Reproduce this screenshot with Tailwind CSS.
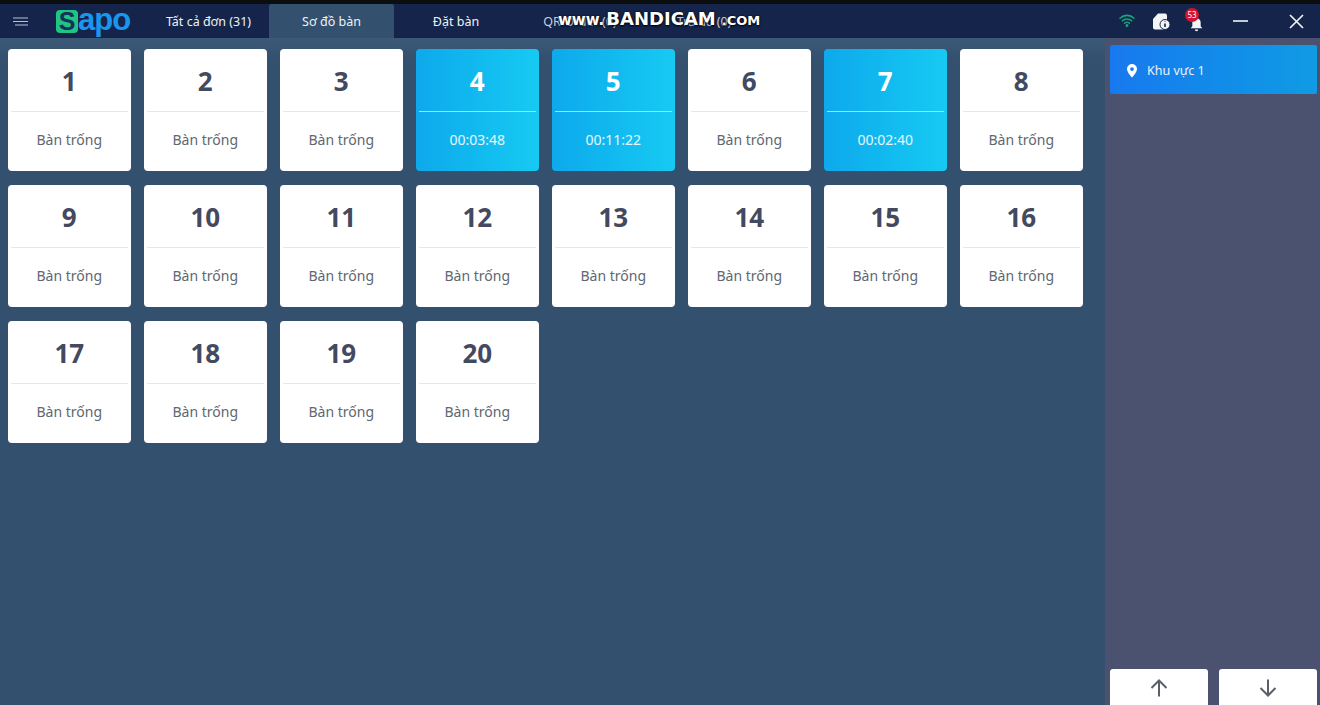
<!DOCTYPE html>
<html lang="vi"><head><meta charset="utf-8"><script src="https://cdn.jsdelivr.net/npm/@tailwindcss/browser@4"></script></head>
<body class="w-[1320px] h-[705px] overflow-hidden bg-[#34506f] font-['Noto_Sans','Open_Sans',sans-serif]">
<div class="relative w-full h-full flex flex-col">
<div class="h-[4px] bg-[#0c0d0f] shrink-0"></div>
<header class="h-[34px] shrink-0 flex items-stretch bg-[#15244a] text-[#eef2f6] text-[12.5px]">
  <div class="w-[56px] flex items-center pl-[13px]">
    <svg width="15" height="9" viewBox="0 0 15 9" fill="none" stroke="#b9c2cf" stroke-width="1.2"><path d="M0 1h15M0 4.500h15M2 8h13"/></svg>
  </div>
  <div class="w-[92px] flex items-center">
    <div class="flex items-center h-[28px]">
      <span class="w-[22px] h-[23px] rounded-[4px] bg-[#20c584] text-[#13345a] flex items-center justify-center font-bold text-[25px] leading-none font-['Liberation_Sans',sans-serif]">S</span>
      <span class="text-[#1a96ee] font-bold text-[31px] leading-none -mt-[3px] font-['Liberation_Sans',sans-serif] tracking-[-1px]">apo</span>
    </div>
  </div>
  <div class="w-[121px] flex items-center justify-center pt-[3px]">Tất cả đơn (31)</div>
  <div class="w-[125px] flex items-center justify-center bg-[#34506f] rounded-t-[2px] pt-[3px]">Sơ đồ bàn</div>
  <div class="w-[124px] flex items-center justify-center pt-[3px]">Đặt bàn</div>
  <div class="w-[124px] flex items-center justify-center text-[#c9d0db] pt-[3px]">QR Order (0)</div>
  <div class="w-[124px] flex items-center justify-center text-[#c9d0db] pt-[3px]">Trả đồ (0)</div>
  <div class="ml-auto flex items-center">
    <svg class="mr-[17px] -mt-[1px]" width="16" height="13" viewBox="0 0 16 13" fill="none" stroke="#16a57c" stroke-width="1.6" stroke-linecap="round"><path d="M1 4.200a10 10 0 0 1 14 0M3.400 6.800a6.600 6.600 0 0 1 9.200 0M5.600 9.200a3.400 3.400 0 0 1 4.800 0"/><circle cx="8" cy="11.400" r=".7" fill="#16a57c"/></svg>
    <svg class="mr-[17px]" width="19" height="19" viewBox="0 0 19 19"><path d="M6 1.500h7a2 2 0 0 1 2 2v12a2 2 0 0 1-2 2H3a2 2 0 0 1-2-2V7z" fill="#f3f4f6"/><circle cx="13" cy="12.500" r="5" fill="#f3f4f6" stroke="#15244a" stroke-width="1"/><path d="M13 9.500v.6M13 11.500v3.500" stroke="#15244a" stroke-width="1.600"/></svg>
    <div class="relative mr-[29px] w-[16px] h-[24px] flex items-end justify-center">
      <svg width="15" height="16" viewBox="0 0 18 18" fill="#f3f4f6"><path d="M9 1a5 5 0 0 1 5 5v4.500l2 2.500H2l2-2.500V6a5 5 0 0 1 5-5z"/><path d="M7 14.500h4a2 2 0 0 1-4 0z"/></svg>
      <span class="absolute top-[-1px] -left-[3px] w-[14px] h-[14px] rounded-full bg-[#d5122f] text-white text-[8px] leading-[14px] text-center">53</span>
    </div>
    <svg class="mr-[41px]" width="15" height="2" viewBox="0 0 15 2"><path d="M0 1h15" stroke="#c4c9d2" stroke-width="2"/></svg>
    <svg class="mr-[16px]" width="15" height="15" viewBox="0 0 15 15"><path d="M1 1l13 13M14 1L1 14" stroke="#eef1f5" stroke-width="1.700"/></svg>
  </div>
</header>
<div class="flex-1 flex min-h-0">
  <main class="w-[1105px] bg-gradient-to-b from-[#3d5978] to-[#34506f] to-[20px] pt-[11px] pl-[8px]">
    <div class="grid grid-cols-[repeat(8,122.500px)] auto-rows-[122px] gap-x-[13.500px] gap-y-[14px]">
      <div class="rounded-[4px] bg-white flex flex-col text-center"><div class="h-[63px] mx-[3px] border-b border-[#e3e6ea] text-[26px] font-bold text-[#43495f] leading-[64px]">1</div><div class="flex-1 flex items-center justify-center text-[14px] text-[#62666f] pb-[4px]">Bàn trống</div></div>
      <div class="rounded-[4px] bg-white flex flex-col text-center"><div class="h-[63px] mx-[3px] border-b border-[#e3e6ea] text-[26px] font-bold text-[#43495f] leading-[64px]">2</div><div class="flex-1 flex items-center justify-center text-[14px] text-[#62666f] pb-[4px]">Bàn trống</div></div>
      <div class="rounded-[4px] bg-white flex flex-col text-center"><div class="h-[63px] mx-[3px] border-b border-[#e3e6ea] text-[26px] font-bold text-[#43495f] leading-[64px]">3</div><div class="flex-1 flex items-center justify-center text-[14px] text-[#62666f] pb-[4px]">Bàn trống</div></div>
      <div class="rounded-[4px] bg-gradient-to-r from-[#0ea9ec] to-[#17caf2] flex flex-col text-center"><div class="h-[63px] mx-[3px] border-b border-[#9fe3f8] text-[26px] font-bold text-white leading-[64px]">4</div><div class="flex-1 flex items-center justify-center text-[14px] text-[#e4f7fd] pb-[4px]">00:03:48</div></div>
      <div class="rounded-[4px] bg-gradient-to-r from-[#0ea9ec] to-[#17caf2] flex flex-col text-center"><div class="h-[63px] mx-[3px] border-b border-[#9fe3f8] text-[26px] font-bold text-white leading-[64px]">5</div><div class="flex-1 flex items-center justify-center text-[14px] text-[#e4f7fd] pb-[4px]">00:11:22</div></div>
      <div class="rounded-[4px] bg-white flex flex-col text-center"><div class="h-[63px] mx-[3px] border-b border-[#e3e6ea] text-[26px] font-bold text-[#43495f] leading-[64px]">6</div><div class="flex-1 flex items-center justify-center text-[14px] text-[#62666f] pb-[4px]">Bàn trống</div></div>
      <div class="rounded-[4px] bg-gradient-to-r from-[#0ea9ec] to-[#17caf2] flex flex-col text-center"><div class="h-[63px] mx-[3px] border-b border-[#9fe3f8] text-[26px] font-bold text-white leading-[64px]">7</div><div class="flex-1 flex items-center justify-center text-[14px] text-[#e4f7fd] pb-[4px]">00:02:40</div></div>
      <div class="rounded-[4px] bg-white flex flex-col text-center"><div class="h-[63px] mx-[3px] border-b border-[#e3e6ea] text-[26px] font-bold text-[#43495f] leading-[64px]">8</div><div class="flex-1 flex items-center justify-center text-[14px] text-[#62666f] pb-[4px]">Bàn trống</div></div>
      <div class="rounded-[4px] bg-white flex flex-col text-center"><div class="h-[63px] mx-[3px] border-b border-[#e3e6ea] text-[26px] font-bold text-[#43495f] leading-[64px]">9</div><div class="flex-1 flex items-center justify-center text-[14px] text-[#62666f] pb-[4px]">Bàn trống</div></div>
      <div class="rounded-[4px] bg-white flex flex-col text-center"><div class="h-[63px] mx-[3px] border-b border-[#e3e6ea] text-[26px] font-bold text-[#43495f] leading-[64px]">10</div><div class="flex-1 flex items-center justify-center text-[14px] text-[#62666f] pb-[4px]">Bàn trống</div></div>
      <div class="rounded-[4px] bg-white flex flex-col text-center"><div class="h-[63px] mx-[3px] border-b border-[#e3e6ea] text-[26px] font-bold text-[#43495f] leading-[64px]">11</div><div class="flex-1 flex items-center justify-center text-[14px] text-[#62666f] pb-[4px]">Bàn trống</div></div>
      <div class="rounded-[4px] bg-white flex flex-col text-center"><div class="h-[63px] mx-[3px] border-b border-[#e3e6ea] text-[26px] font-bold text-[#43495f] leading-[64px]">12</div><div class="flex-1 flex items-center justify-center text-[14px] text-[#62666f] pb-[4px]">Bàn trống</div></div>
      <div class="rounded-[4px] bg-white flex flex-col text-center"><div class="h-[63px] mx-[3px] border-b border-[#e3e6ea] text-[26px] font-bold text-[#43495f] leading-[64px]">13</div><div class="flex-1 flex items-center justify-center text-[14px] text-[#62666f] pb-[4px]">Bàn trống</div></div>
      <div class="rounded-[4px] bg-white flex flex-col text-center"><div class="h-[63px] mx-[3px] border-b border-[#e3e6ea] text-[26px] font-bold text-[#43495f] leading-[64px]">14</div><div class="flex-1 flex items-center justify-center text-[14px] text-[#62666f] pb-[4px]">Bàn trống</div></div>
      <div class="rounded-[4px] bg-white flex flex-col text-center"><div class="h-[63px] mx-[3px] border-b border-[#e3e6ea] text-[26px] font-bold text-[#43495f] leading-[64px]">15</div><div class="flex-1 flex items-center justify-center text-[14px] text-[#62666f] pb-[4px]">Bàn trống</div></div>
      <div class="rounded-[4px] bg-white flex flex-col text-center"><div class="h-[63px] mx-[3px] border-b border-[#e3e6ea] text-[26px] font-bold text-[#43495f] leading-[64px]">16</div><div class="flex-1 flex items-center justify-center text-[14px] text-[#62666f] pb-[4px]">Bàn trống</div></div>
      <div class="rounded-[4px] bg-white flex flex-col text-center"><div class="h-[63px] mx-[3px] border-b border-[#e3e6ea] text-[26px] font-bold text-[#43495f] leading-[64px]">17</div><div class="flex-1 flex items-center justify-center text-[14px] text-[#62666f] pb-[4px]">Bàn trống</div></div>
      <div class="rounded-[4px] bg-white flex flex-col text-center"><div class="h-[63px] mx-[3px] border-b border-[#e3e6ea] text-[26px] font-bold text-[#43495f] leading-[64px]">18</div><div class="flex-1 flex items-center justify-center text-[14px] text-[#62666f] pb-[4px]">Bàn trống</div></div>
      <div class="rounded-[4px] bg-white flex flex-col text-center"><div class="h-[63px] mx-[3px] border-b border-[#e3e6ea] text-[26px] font-bold text-[#43495f] leading-[64px]">19</div><div class="flex-1 flex items-center justify-center text-[14px] text-[#62666f] pb-[4px]">Bàn trống</div></div>
      <div class="rounded-[4px] bg-white flex flex-col text-center"><div class="h-[63px] mx-[3px] border-b border-[#e3e6ea] text-[26px] font-bold text-[#43495f] leading-[64px]">20</div><div class="flex-1 flex items-center justify-center text-[14px] text-[#62666f] pb-[4px]">Bàn trống</div></div>
    </div>
  </main>
  <aside class="w-[215px] bg-[#4a5270] flex flex-col pl-[5px] pr-[3px] pt-[7px]">
    <div class="h-[49px] rounded-[2px] bg-gradient-to-r from-[#1879ee] to-[#109be4] flex items-center pl-[16px] pt-[4px] text-[12.500px] text-[#eaf3fd]">
      <svg class="mr-[9px] -mt-[2px]" width="12" height="14" viewBox="0 0 12 14"><path fill-rule="evenodd" d="M6 0a5 5 0 0 1 5 5c0 3.400-5 8.500-5 8.500S1 8.400 1 5a5 5 0 0 1 5-5zm0 3.200a1.900 1.900 0 1 0 0 3.800 1.900 1.900 0 0 0 0-3.800z" fill="#fff"/></svg>
      Khu vực 1
    </div>
    <div class="mt-auto flex gap-[11px] h-[36px]">
      <div class="w-[98px] rounded-t-[3px] bg-white flex items-center justify-center pt-[2px]"><svg width="20" height="20" viewBox="0 0 20 20" fill="none" stroke="#5a5f6b" stroke-width="2"><path d="M10 18.500V2.500M2.500 10L10 2.500l7.500 7.500"/></svg></div>
      <div class="w-[98px] rounded-t-[3px] bg-white flex items-center justify-center pt-[2px]"><svg width="20" height="20" viewBox="0 0 20 20" fill="none" stroke="#5a5f6b" stroke-width="2"><path d="M10 1.500v16M2.500 10l7.500 7.500 7.500-7.500"/></svg></div>
    </div>
  </aside>
</div>
<div class="absolute left-[558px] top-[5px] text-white font-bold whitespace-nowrap font-['DejaVu_Sans',sans-serif] [text-shadow:0_0_2px_#000,0_1px_2px_#000] flex items-baseline"><span class="text-[15px] mr-[1px]">www.</span><span class="text-[18px] ml-[1px] mr-[6px]">BANDICAM</span><span class="text-[13px]">.COM</span></div>
</div>
</body></html>
